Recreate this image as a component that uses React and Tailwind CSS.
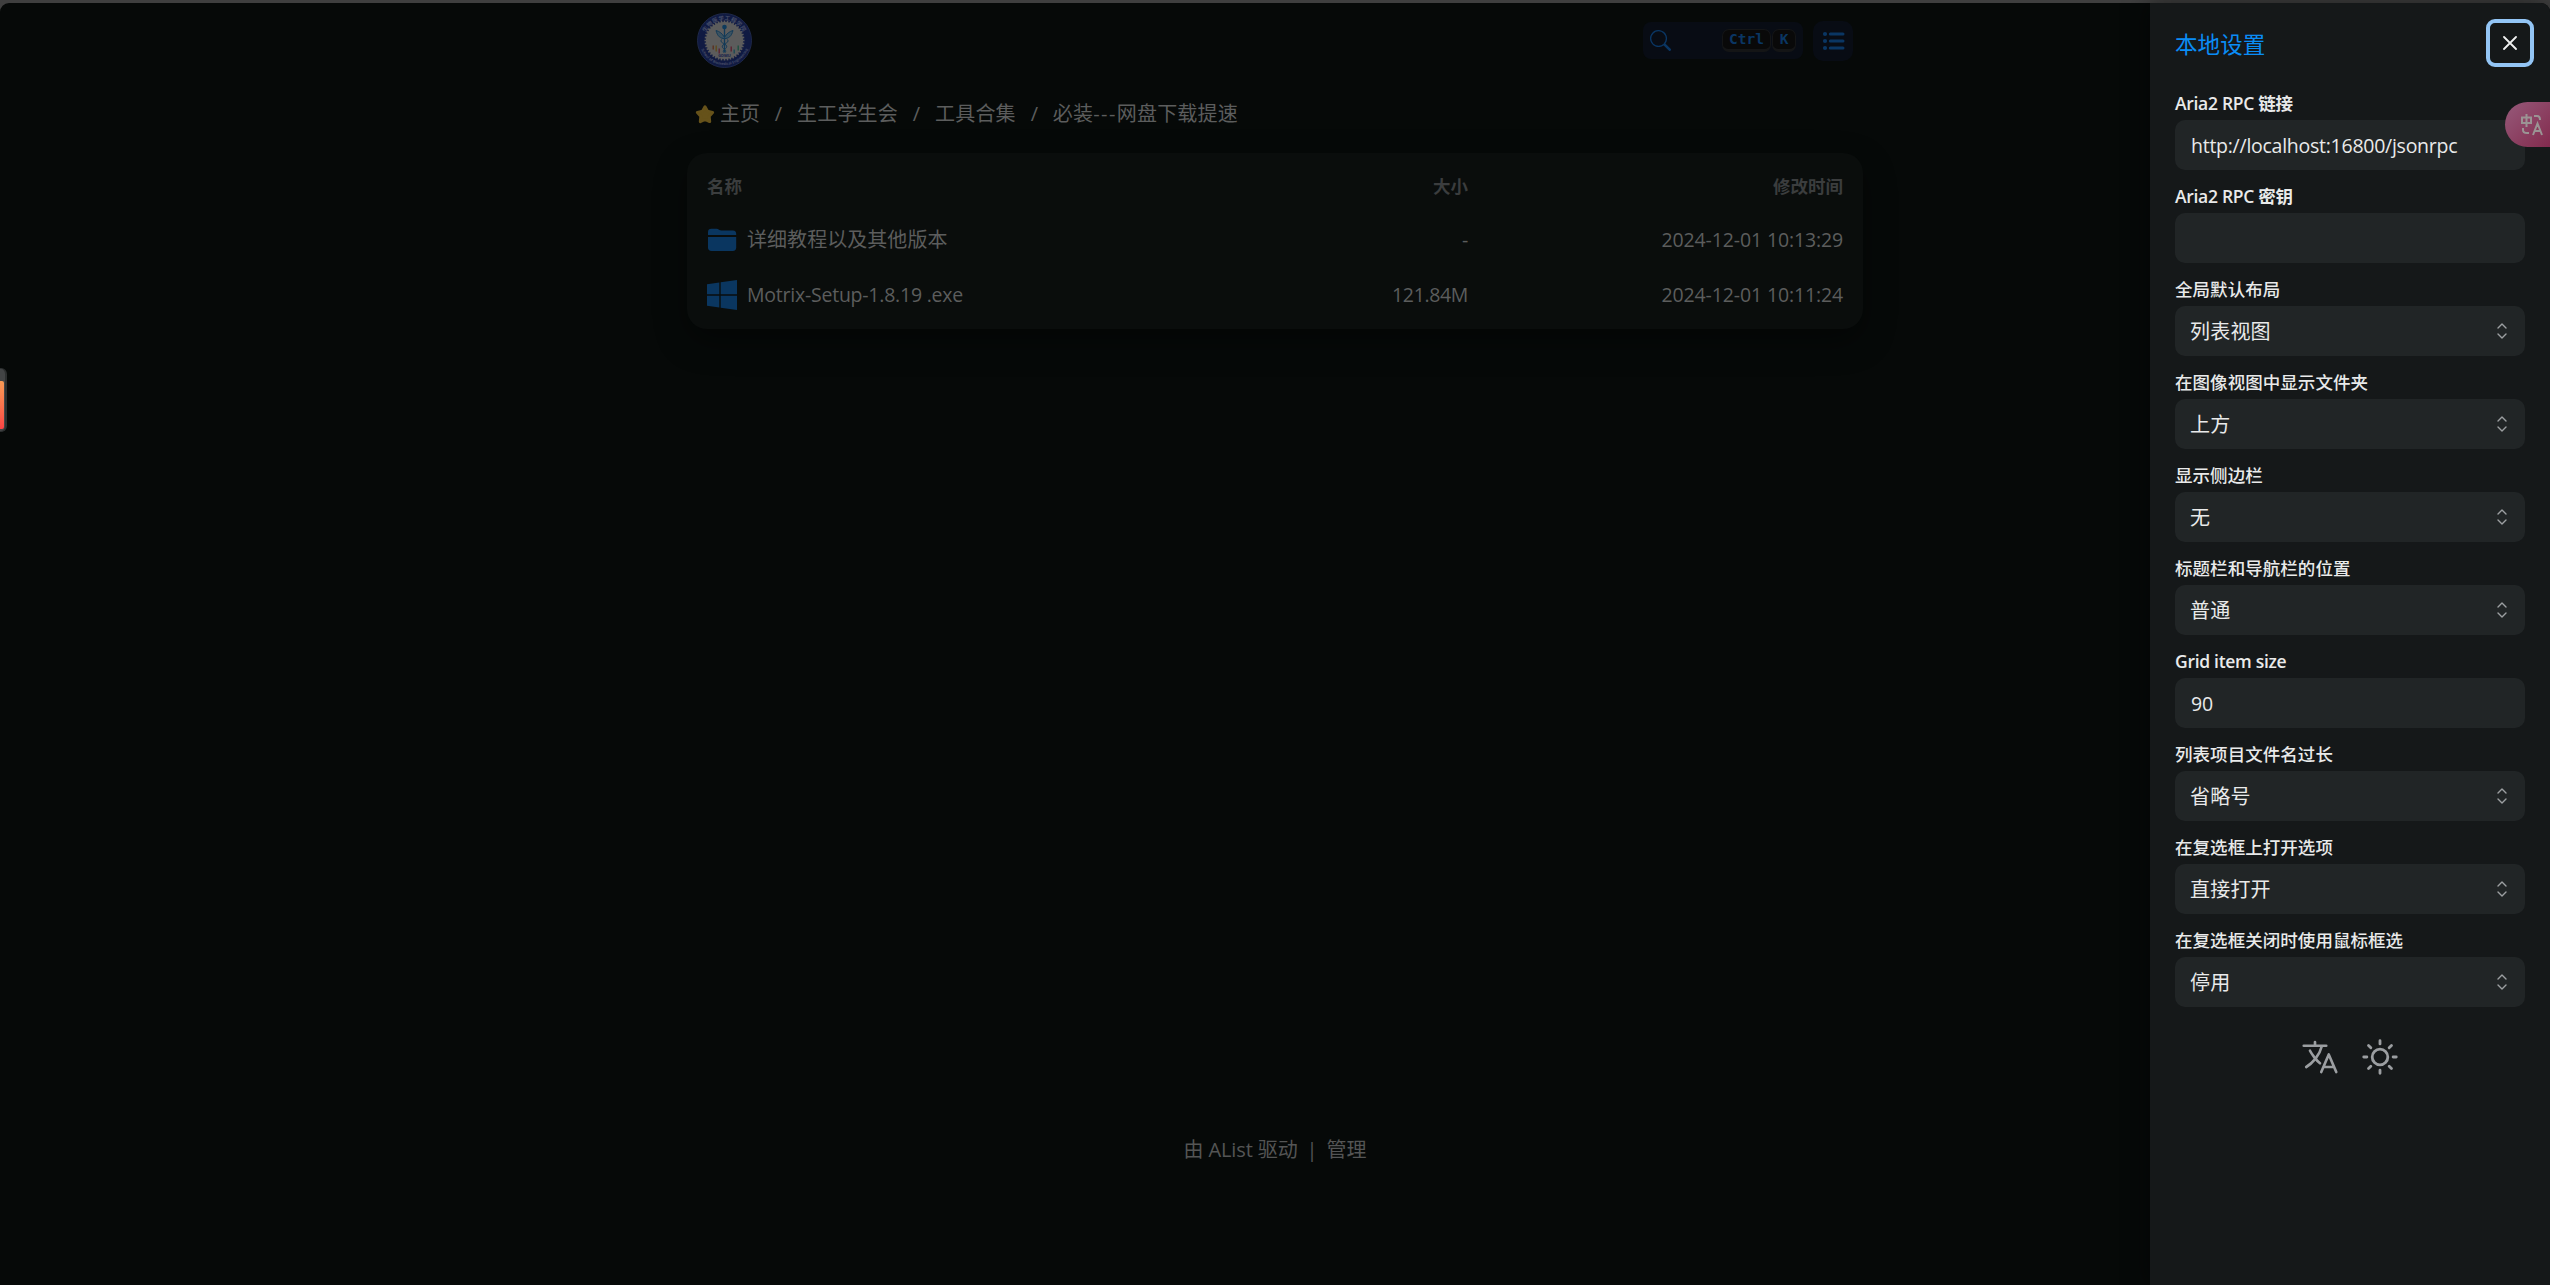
import React from "react";

const FONT =
  "font-['Open_Sans','Noto_Sans_CJK_SC',sans-serif]";

const fields = [
  { label: "Aria2 RPC 链接", value: "http://localhost:16800/jsonrpc" },
  { label: "Aria2 RPC 密钥", value: "" },
  { label: "全局默认布局", value: "列表视图", select: true },
  { label: "在图像视图中显示文件夹", value: "上方", select: true },
  { label: "显示侧边栏", value: "无", select: true },
  { label: "标题栏和导航栏的位置", value: "普通", select: true },
  { label: "Grid item size", value: "90" },
  { label: "列表项目文件名过长", value: "省略号", select: true },
  { label: "在复选框上打开选项", value: "直接打开", select: true },
  { label: "在复选框关闭时使用鼠标框选", value: "停用", select: true },
];

function Logo() {
  const ticks = Array.from({ length: 40 }, (_, i) => i * 9);
  const bars = [
    [-12, 5, 4, "#5a3020"], [-9, 5, 6, "#5c4a1c"], [-6, 8, 5, "#5a2230"],
    [6, 6, 5, "#5a2230"], [9, 9, 4, "#1d4a55"], [13, 5, 5, "#1d5040"],
  ];
  return (
    <svg width="55" height="55" viewBox="-27.5 -27.5 55 55">
      <defs>
        <path id="arcTop" d="M-20 4A20.4 20.4 0 1 1 20 4" />
        <path id="arcBottom" d="M-24.6 4A25 25 0 0 0 24.6 4" />
      </defs>
      <circle r="27" fill="#101a42" stroke="#1e2848" strokeWidth="1" />
      {ticks.map((a) => (
        <rect key={a} x="-0.8" y="-20" width="1.6" height="3" fill="#5c5c5c" transform={`rotate(${a})`} />
      ))}
      <circle r="18.6" fill="#5c5c5c" />
      <text fontSize="5.5" fill="#454c66" fontWeight="700" letterSpacing="0.4">
        <textPath href="#arcTop" startOffset="50%" textAnchor="middle">生物医学工程学院</textPath>
      </text>
      <text fontSize="3.6" fill="#454c66" fontWeight="700">
        <textPath href="#arcBottom" startOffset="50%" textAnchor="middle">School of Biomedical Engineering</textPath>
      </text>
      <g stroke="#123a58" fill="none" strokeWidth="1">
        <path d="M0 -12V12" strokeWidth="1.3" />
        <path d="M-8.5 -10C-7 -4 -4 -2 0 -2C4 -2 7 -4 8.5 -10C5 -9 2 -7 0 -3C-2 -7 -5 -9 -8.5 -10Z" fill="#3b5260" />
        <path d="M-3 -1C-6 3 4 3 2 7C1 9 -2 9 -1 12M3 -1C6 3 -4 3 -2 7C-1 9 2 9 1 12" />
      </g>
      <circle cy="-13.5" r="2.3" fill="#0d3a5c" />
      {bars.map(([x, y, h, c]) => (
        <rect key={x} x={x} y={y} width="1.4" height={h} fill={c} />
      ))}
      <text y="16.5" fontSize="4" textAnchor="middle" fontWeight="700" fill="#14204a">GDMU</text>
    </svg>
  );
}

function SearchIcon() {
  return (
    <svg width="21" height="21" viewBox="0 0 16 16" fill="#0a3663">
      <path d="M11.742 10.344a6.5 6.5 0 1 0-1.397 1.398h-.001c.03.04.062.078.098.115l3.85 3.85a1 1 0 0 0 1.415-1.414l-3.85-3.85a1.007 1.007 0 0 0-.115-.1zM12 6.5a5.5 5.5 0 1 1-11 0 5.5 5.5 0 0 1 11 0z" />
    </svg>
  );
}

function ListIcon() {
  return (
    <svg width="24" height="22" viewBox="0 0 24 22" stroke="#0a3663" strokeLinecap="round" fill="#0a3663">
      <path d="M9.3 4H22M9.3 11H22M9.3 18H22" strokeWidth="3" />
      <g stroke="none">
        <circle cx="4" cy="4" r="2.1" />
        <circle cx="4" cy="11" r="2.1" />
        <circle cx="4" cy="18" r="2.1" />
      </g>
    </svg>
  );
}

function StarIcon() {
  return (
    <svg width="20" height="19" viewBox="0 0 20 19" fill="#66521a">
      <path d="M10 1.8L12.5 6.3L17.6 7.4L14.2 11.3L14.7 16.6L10 14.4L5.3 16.6L5.8 11.3L2.4 7.4L7.5 6.3Z" stroke="#66521a" strokeWidth="3" strokeLinejoin="round" />
    </svg>
  );
}

function FolderIcon() {
  return (
    <svg width="30" height="24" viewBox="0 0 30 24" fill="#0a3660">
      <path d="M1 7V4C1 1.8 2.3 .8 4.3 .8H9.5C11.8 .8 12.2 2.6 14.5 2.6H26C28.3 2.6 29.2 4 29.2 6V7Z" />
      <path d="M1 9H29.2V19.5C29.2 21.8 28 23 25.8 23H4.5C2.2 23 1 21.8 1 19.5Z" />
    </svg>
  );
}

function WindowsIcon() {
  return (
    <svg width="30" height="30" viewBox="0 0 30 30" fill="#0a3660">
      <path d="M0 4.2L12.3 2.5V14.3H0ZM13.7 2.3L30 0V14.3H13.7ZM0 15.7H12.3V27.5L0 25.8ZM13.7 15.7H30V30L13.7 27.7Z" />
    </svg>
  );
}

function SelectIcon() {
  return (
    <svg width="10" height="16" viewBox="0 0 10 16" fill="none" stroke="#9c9fa1" strokeWidth="1.4" strokeLinecap="round" strokeLinejoin="round">
      <path d="M1 5L5 1L9 5M1 11L5 15L9 11" />
    </svg>
  );
}

function TranslateIcon() {
  return (
    <svg width="40" height="40" viewBox="0 0 512 512" fill="none" stroke="#9b9ea1" strokeWidth="34" strokeLinecap="round" strokeLinejoin="round">
      <path d="M48 112h288M192 64v48M272 448l96-224 96 224M301.5 384h133M281.3 112S257 206 199 277 80 384 80 384" />
      <path d="M256 336s-35-27-72-75-56-85-56-85" />
    </svg>
  );
}

function SunIcon() {
  return (
    <svg width="40" height="40" viewBox="0 0 512 512" fill="none" stroke="#9b9ea1" strokeWidth="36" strokeLinecap="round">
      <path d="M256 48v40M256 424v40M403.08 108.92l-30 30M138.86 373.14l-30 30M464 256h-40M88 256H48M403.08 403.08l-30-30M138.86 138.86l-30-30" />
      <circle cx="256" cy="256" r="100" />
    </svg>
  );
}

function Kbd({ children, className }) {
  return (
    <kbd className={`flex h-[23px] items-center justify-center rounded-[7px] border border-b-[3px] border-[#141516] bg-[#090909] font-['DejaVu_Sans_Mono',monospace] text-[14.5px] leading-none font-bold text-[#0a3663] ${className}`}>
      {children}
    </kbd>
  );
}

function Header() {
  return (
    <header className="flex h-[75px] items-center justify-between pr-[10px] pl-[10px]">
      <Logo />
      <div className="flex items-center gap-[10px]">
        <div className="flex h-[37px] w-[160px] items-center rounded-lg bg-[#080c14] pr-[7px] pl-[7px]">
          <SearchIcon />
          <div className="ml-auto flex">
            <Kbd className="w-[49px]">Ctrl</Kbd>
            <Kbd className="ml-px w-[24px]">K</Kbd>
          </div>
        </div>
        <div className="flex h-[40px] w-[40px] items-center justify-center rounded-[10px] bg-[#080c14]">
          <ListIcon />
        </div>
      </div>
    </header>
  );
}

function Breadcrumb() {
  return (
    <nav className="mt-[16px] flex h-[40px] items-center pl-[8px] text-[20px] text-[#5c5d5d]">
      <StarIcon />
      <span className="ml-[5px]">主页</span>
      <span className="w-[37px] text-center">/</span>
      <span className="tracking-[0.2px]">生工学生会</span>
      <span className="w-[37px] text-center">/</span>
      <span className="tracking-[0.2px]">工具合集</span>
      <span className="w-[37px] text-center">/</span>
      <span className="tracking-[0.2px]">
        必装<span className="tracking-[1.4px]">---</span>网盘下载提速
      </span>
    </nav>
  );
}

function Row({ icon, name, size, time }) {
  return (
    <div className="flex h-[55px] items-center text-[19.5px] text-[#5c5d5d]">
      <span className="flex w-[40px] items-center">{icon}</span>
      {name}
      <span className="w-[240px] text-right tracking-[-0.35px]">{size}</span>
      <span className="w-[375px] text-right tracking-[-0.13px]">{time}</span>
    </div>
  );
}

function FileCard() {
  return (
    <section className="mt-[19px] flex h-[176px] flex-col rounded-[20px] bg-[#0a0d0c] px-[20px] pt-[10px] shadow-[0_12px_32px_rgba(0,0,0,0.4)]">
      <div className="mb-[3px] flex h-[46px] items-center text-[17.5px] font-bold text-[#3b3d3e]">
        <span className="flex-1">名称</span>
        <span className="w-[240px] text-right">大小</span>
        <span className="w-[375px] text-right">修改时间</span>
      </div>
      <Row
        icon={<FolderIcon />}
        name={<span className="flex-1 text-[20px] tracking-[0.05px]">详细教程以及其他版本</span>}
        size="-"
        time="2024-12-01 10:13:29"
      />
      <Row
        icon={<WindowsIcon />}
        name={<span className="flex-1 tracking-[-0.23px]">Motrix-Setup-1.8.19 .exe</span>}
        size="121.84M"
        time="2024-12-01 10:11:24"
      />
    </section>
  );
}

function Drawer() {
  return (
    <aside className="absolute top-[3px] right-0 bottom-0 flex w-[400px] flex-col rounded-tr-[9px] bg-[#151819] pr-[25px] pl-[25px] text-[#e9eaea] shadow-[-2px_0_24px_rgba(0,0,0,0.5)]">
      <div className="flex h-[84px] justify-between">
        <h2 className="mt-[25px] text-[22.5px] leading-[34px] tracking-[0.1px] text-[#0a8cf5]">本地设置</h2>
        <button className="mt-[16px] -mr-[9px] flex h-[48px] w-[48px] items-center justify-center rounded-[9px] border-[4px] border-[#93c5f5]">
          <svg width="14" height="14" viewBox="0 0 14 14" stroke="#f0f0f0" strokeWidth="1.8" strokeLinecap="round">
            <path d="M1 1L13 13M13 1L1 13" />
          </svg>
        </button>
      </div>
      {fields.map((f) => (
        <div key={f.label} className="flex h-[93px] flex-col">
          <label className="mb-px flex h-[32px] items-center text-[17.5px] font-semibold tracking-[-0.3px]">
            <span className={f.select ? "font-medium tracking-[0.05px]" : ""}>{f.label}</span>
          </label>
          <div className="flex h-[50px] items-center justify-between rounded-[10px] bg-[#212526] pr-[18px] pl-[15px] text-[20px]">
            <span className={f.select ? "pt-[2px] tracking-[0.2px]" : "pt-[2px] pl-px text-[19.5px] tracking-[-0.26px]"}>{f.value}</span>
            {f.select && <SelectIcon />}
          </div>
        </div>
      ))}
      <div className="mt-[20px] flex justify-center gap-[20px]">
        <TranslateIcon />
        <SunIcon />
      </div>
    </aside>
  );
}

function TranslateBubble() {
  return (
    <div className="absolute top-[102px] right-0 flex h-[45px] w-[45px] items-center rounded-l-full bg-linear-to-br from-[#96597a] to-[#822a4e] pl-[16px]">
      <svg width="22" height="22" viewBox="0 0 22 22" fill="none" stroke="#9b9494" strokeWidth="2">
        <path d="M1 3.5H10V9H1ZM5.5 0V13M13 2H16Q19 2 19 6M2 14V16Q2 19 6 19H8M12 21L16.5 9.5L21 21M13.5 17H19.5" />
      </svg>
    </div>
  );
}

export default function App() {
  return (
    <div className={`relative h-[1285px] w-[2550px] overflow-hidden bg-[#3f3f3f] pt-[3px] ${FONT}`}>
      <div className="flex h-[1282px] flex-col items-center rounded-t-[9px] bg-[#060908]">
        <main className="flex w-[1176px] flex-1 flex-col">
          <Header />
          <Breadcrumb />
          <FileCard />
        </main>
        <footer className="mb-[115px] flex h-[40px] items-center text-[20px] text-[#545555]">
          <span className="tracking-[-0.1px]">由 AList 驱动</span>
          <span className="w-[29px] text-center">|</span>
          <span>管理</span>
        </footer>
      </div>
      <div className="absolute top-[368px] left-0 flex h-[64px] w-[7px] items-start rounded-r-[6px] border-y border-r-2 border-[#2c2f2f] bg-[#424445] pt-[12px]">
        <div className="h-[48px] w-[4px] rounded-r-[2px] bg-linear-to-b from-[#f79a55] to-[#fb4245]" />
      </div>
      <Drawer />
      <TranslateBubble />
    </div>
  );
}
